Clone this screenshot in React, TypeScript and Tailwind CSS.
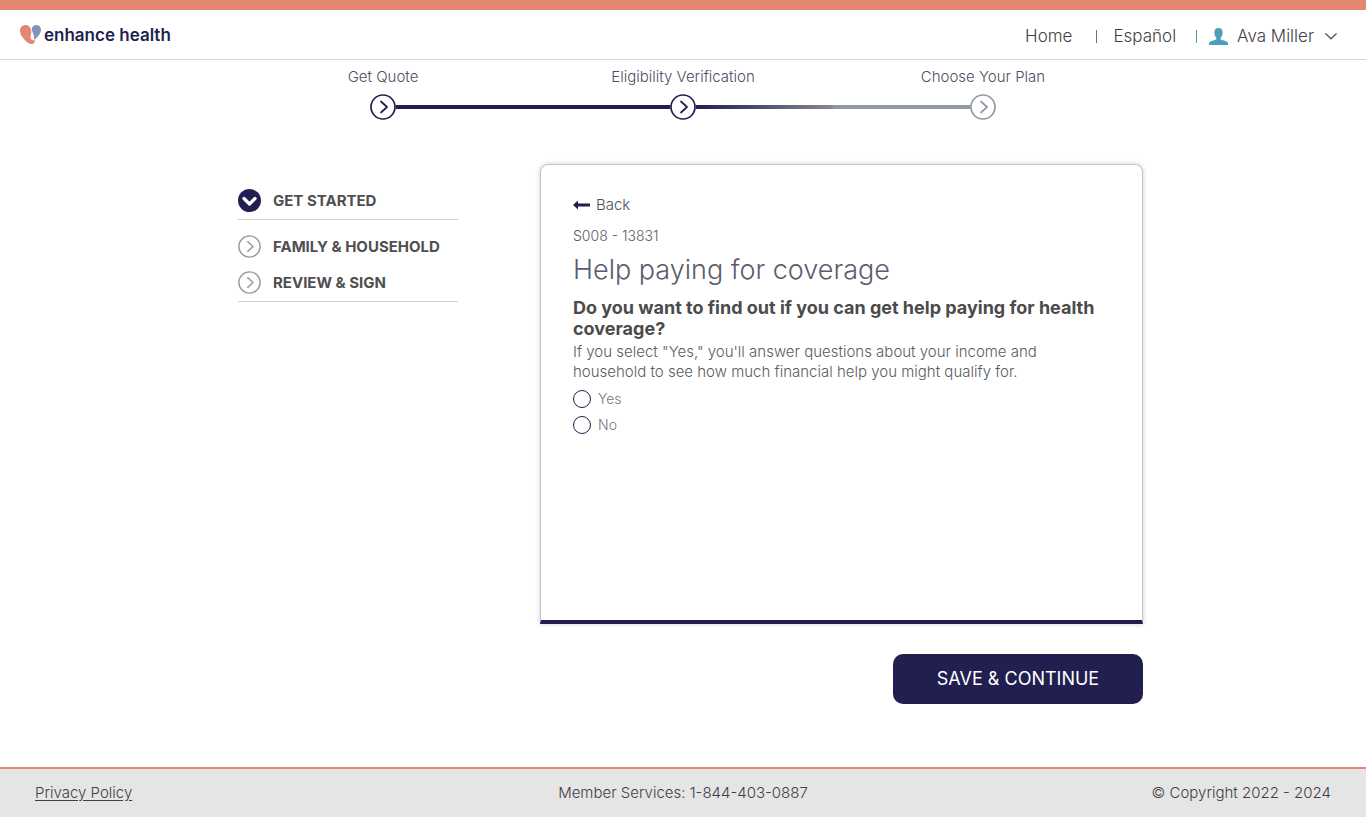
import { useState } from "react";

function Logo() {
  return (
    <a href="#" className="flex items-center gap-[3px]" aria-label="enhance health">
      <svg width="21" height="20" viewBox="0 0 21 20" aria-hidden="true">
        <path
          d="M5.5 0C2.2 0 0 2.5 0 5.8c0 3.2 2 6.200 4.600 9C7 17.500 10 19.600 12.800 18.900c1.600-.5 2.200-2 1.900-3.900-2.500.8-4.400-.8-4.300-3.200.1-1.600 1.100-2.900.9-5.300C11 2.500 8.800 0 5.500 0Z"
          fill="#e58673"
        />
        <path
          d="M16 0c-2.700 0-4.300 2.200-4.200 4.700.1 2.300 1.600 3.300 2 5.500.3 1.700-.1 3.300.6 4.600 2.300-1.900 6.600-6.300 6.600-9.900C21 2 18.800 0 16 0Z"
          fill="#8a90b8"
        />
      </svg>
      <span className="text-[17px] leading-6 font-semibold text-[#211f50]">enhance health</span>
    </a>
  );
}

function StepIcon({ size, color, stroke }: { size: number; color: string; stroke: number }) {
  return (
    <svg width={size} height={size} viewBox="0 0 26 26" fill="none" stroke={color} strokeWidth={stroke} className="shrink-0" aria-hidden="true">
      <circle cx="13" cy="13" r="12" fill="white" />
      <path d="m11 7.500 6 5.500-6 5.500" strokeLinecap="round" strokeLinejoin="round" />
    </svg>
  );
}

function ActiveIcon() {
  return (
    <svg width="23" height="23" viewBox="0 0 23 23" className="shrink-0" aria-hidden="true">
      <circle cx="11.5" cy="11.500" r="11.500" fill="#211f50" />
      <path d="m6 9.500 5.500 5.500L17 9.500" fill="none" stroke="white" strokeWidth="3.200" strokeLinecap="round" strokeLinejoin="round" />
    </svg>
  );
}

const steps = [
  { label: "Get Quote", color: "#211f50" },
  { label: "Eligibility Verification", color: "#211f50" },
  { label: "Choose Your Plan", color: "#9198a5" },
];

function Stepper() {
  return (
    <ol className="mx-auto grid w-full max-w-[900px] grid-cols-3 pt-[7px] text-[15px] leading-5 text-[#4a4f63]">
      {steps.map((step, i) => (
        <li key={step.label} className="flex flex-col items-center gap-[7px]">
          <span>{step.label}</span>
          <span className="flex w-full items-center">
            <span className={i === 0 ? "h-1 flex-1" : i === 1 ? "h-1 flex-1 bg-[#211f50]" : "h-1 flex-1 bg-[#9198a5]"} />
            <StepIcon size={26} color={step.color} stroke={1.7} />
            <span
              className={
                i === 0
                  ? "h-1 flex-1 bg-[#211f50]"
                  : i === 1
                    ? "h-1 flex-1 bg-linear-to-r from-[#211f50] to-[#858b94]"
                    : "h-1 flex-1"
              }
            />
          </span>
        </li>
      ))}
    </ol>
  );
}

function Sidebar() {
  return (
    <nav className="w-[220px] shrink-0 pt-[25px] text-[15px] leading-[23px] font-bold text-[#4f4f4f]">
      <a href="#" className="flex items-center gap-3 border-b border-[#cfcfcf] pb-[7px]">
        <ActiveIcon />
        GET STARTED
      </a>
      <div className="flex flex-col gap-[13px] border-b border-[#cfcfcf] pt-[15px] pb-[7px]">
        <a href="#" className="flex items-center gap-3">
          <StepIcon size={23} color="#9b9b9b" stroke={1.6} />
          FAMILY &amp; HOUSEHOLD
        </a>
        <a href="#" className="flex items-center gap-3">
          <StepIcon size={23} color="#9b9b9b" stroke={1.6} />
          REVIEW &amp; SIGN
        </a>
      </div>
    </nav>
  );
}

function QuestionCard() {
  const [answer, setAnswer] = useState("");
  return (
    <section className="min-h-[460px] rounded-t-lg border border-b-4 border-[#c4c4c4] border-b-[#211f50] px-8 pt-[30px] pb-8 text-[14px] leading-5 text-[#5b5b5f] shadow-[0_0_5px_rgba(0,0,0,0.2)]">
      <a href="#" className="flex w-fit items-center gap-1.5 text-[15px] text-[#4a4f63]">
        <svg width="17" height="10" viewBox="0 0 17 10" fill="#211f50" aria-hidden="true">
          <path d="M0 5 5 .5v3h12v3H5v3Z" />
        </svg>
        Back
      </a>
      <p className="mt-[11px]">S008 - 13831</p>
      <h1 className="mt-1.5 text-[27px] leading-9 font-light text-[#5a5c6e]">Help paying for coverage</h1>
      <fieldset>
        <legend className="pt-[9px] text-[18px] leading-[21px] font-bold text-[#4b4b4b]">
          Do you want to find out if you can get help paying for health coverage?
        </legend>
        <p className="mt-[3px] text-[15px]">
          If you select "Yes," you'll answer questions about your income and household to see how much financial help you might qualify for.
        </p>
        <div className="mt-2 flex flex-col gap-2">
          {["Yes", "No"].map((option) => (
            <label key={option} className="flex w-fit items-center gap-[7px] leading-[18px] text-[#77777b]">
              <input
                type="radio"
                name="help"
                value={option}
                checked={answer === option}
                onChange={() => setAnswer(option)}
                className="size-[18px] appearance-none rounded-full border border-[#211f50] bg-white checked:border-[5px]"
              />
              {option}
            </label>
          ))}
        </div>
      </fieldset>
    </section>
  );
}

export default function App() {
  return (
    <div className="flex min-h-screen flex-col bg-white font-['Inter','Open_Sans',sans-serif] font-light">
      <header className="flex h-[60px] items-center justify-between border-t-10 border-b border-t-[#e58673] border-b-[#d6d6d6] pr-[29px] pl-5">
        <Logo />
        <nav className="flex items-center pt-[3px] text-[17px] leading-6 text-[#3f3f46]">
          <a href="#">Home</a>
          <span className="ml-6 h-[13px] w-px bg-[#7a6a92]" />
          <a href="#" className="ml-4">Español</a>
          <span className="ml-5 h-[13px] w-px bg-[#4f9a9c]" />
          <button type="button" className="ml-3 flex items-center">
            <svg width="19" height="17" viewBox="0 0 19 17" fill="#4ba0b9" aria-hidden="true">
              <path d="M9.500 0C6.600 0 5.200 1.900 5.400 4.800c.1 2.400.8 3.900 1.900 5v1.700L2.600 13C1 13.500 0 14.300 0 15.800V17h19v-1.200c0-1.500-1-2.300-2.600-2.800l-4.700-1.500V9.800c1.100-1.100 1.800-2.600 1.900-5C13.800 1.900 12.400 0 9.500 0Z" />
            </svg>
            <span className="ml-[9px]">Ava Miller</span>
            <svg width="12" height="7" viewBox="0 0 12 7" fill="none" stroke="#555" strokeWidth="1.300" className="ml-[11px]" aria-hidden="true">
              <path d="m.8.800 5.200 5L11.200.800" strokeLinecap="round" />
            </svg>
          </button>
        </nav>
      </header>
      <Stepper />
      <main className="mx-auto flex w-full max-w-[920px] flex-1 justify-between gap-8 pt-11 pb-[63px] pl-[15px]">
        <Sidebar />
        <div className="flex w-full max-w-[603px] flex-col">
          <QuestionCard />
          <button type="button" className="mt-[30px] h-[50px] w-[250px] self-end rounded-[10px] bg-[#211f50] text-[18px] leading-6 font-normal text-white">
            SAVE &amp; CONTINUE
          </button>
        </div>
      </main>
      <footer className="grid h-[50px] grid-cols-3 items-center border-t-2 border-[#e58673] bg-[#e5e5e5] px-[35px] text-[15px] leading-5 text-[#3f3f46]">
        <a href="#" className="justify-self-start underline underline-offset-2">Privacy Policy</a>
        <span className="justify-self-center">Member Services: 1-844-403-0887</span>
        <span className="justify-self-end">© Copyright 2022 - 2024</span>
      </footer>
    </div>
  );
}
